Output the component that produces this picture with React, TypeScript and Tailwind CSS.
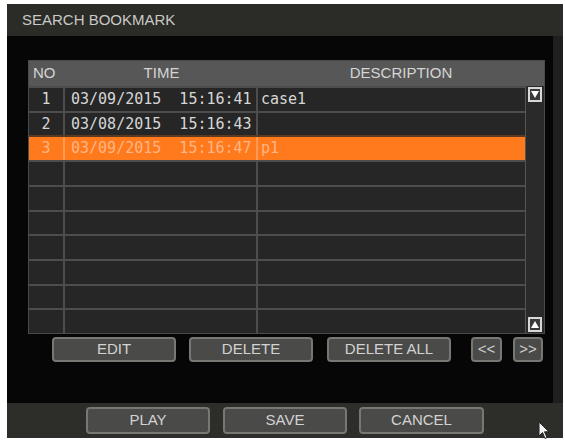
import React from 'react'

type Bookmark = { no: number; time: string; desc: string }

const bookmarks: Bookmark[] = [
  { no: 1, time: '03/09/2015 15:16:41', desc: 'case1' },
  { no: 2, time: '03/08/2015 15:16:43', desc: '' },
  { no: 3, time: '03/09/2015 15:16:47', desc: 'p1' },
]

const SELECTED = 3
const ROWS = 10

const label = { fontFamily: '"Liberation Sans", Arial, sans-serif' }
const mono = { fontFamily: '"DejaVu Sans Mono", "Liberation Mono", monospace' }

function DvrButton({ children, className }: { children: React.ReactNode; className: string }) {
  return (
    <button
      className={`flex items-center justify-center rounded-[4px] border-2 border-[#777774] bg-[#4a4a48] text-[15px] text-[#d2d2d2] ${className}`}
      style={label}
    >
      {children}
    </button>
  )
}

function ArrowBox({ dir }: { dir: 'up' | 'down' }) {
  return (
    <div className="mx-auto flex h-[15px] w-[14px] items-center justify-center border-2 border-[#d8d8d8] bg-[#3a3a3a]">
      <svg width="8" height="7" viewBox="0 0 8 7">
        {dir === 'down' ? <polygon points="0,0 8,0 4,7" fill="#fff" /> : <polygon points="0,7 8,7 4,0" fill="#fff" />}
      </svg>
    </div>
  )
}

export default function App() {
  const rows = Array.from({ length: ROWS }, (_, i) => bookmarks[i] ?? null)

  return (
    <div className="relative h-[440px] w-[565px] overflow-hidden bg-white pl-[7px] pt-[4px]">
      <div className="flex h-[434px] w-[556px] flex-col">
        {/* title bar */}
        <div className="flex h-[32px] items-center bg-[#2b2b28] pl-[15px] text-[15px] text-[#c9c9c6]" style={label}>
          SEARCH BOOKMARK
        </div>

        {/* body */}
        <div className="flex flex-1 flex-col border-r-[10px] border-[#1f1f1e] bg-[#060606] pl-[21px] pt-[24px]">
          <div className="w-[517px] border border-[#4a4a4a]">
            <div className="flex h-[25px] items-center bg-[#575757] text-[15px] text-[#d4d4d4]" style={label}>
              <div className="w-[36px] pl-[4px]">NO</div>
              <div className="w-[193px] text-center">TIME</div>
              <div className="flex-1 text-center">DESCRIPTION</div>
            </div>
            <div className="flex h-[247px]">
              <div className="grid flex-1 grid-rows-[repeat(10,1fr)]">
                {rows.map((r, i) => {
                  const sel = r?.no === SELECTED
                  return (
                    <div
                      key={i}
                      className={`flex border-t-2 text-[15px] ${sel ? 'border-[#5a3a22] bg-[#ff7a1c] text-[#ffb585]' : 'border-[#4d4d4d] bg-[#262626] text-[#d6d6d6]'}`}
                      style={mono}
                    >
                      <div className={`flex w-[36px] items-center justify-center border-r-2 ${sel ? 'border-[#ff9a55]' : 'border-[#4d4d4d]'}`}>
                        {r?.no}
                      </div>
                      <div className={`flex w-[193px] items-center whitespace-pre border-r-2 pl-[6px] ${sel ? 'border-[#ff9a55]' : 'border-[#4d4d4d]'}`}>
                        {r?.time.replace(' ', '  ')}
                      </div>
                      <div className="flex flex-1 items-center pl-[3px]">{r?.desc}</div>
                    </div>
                  )
                })}
              </div>
              {/* scroll column */}
              <div className="flex w-[19px] flex-col justify-between border-l border-[#555] bg-[#2a2a2a] py-[1px]">
                <ArrowBox dir="down" />
                <ArrowBox dir="up" />
              </div>
            </div>
          </div>

          <div className="mt-[3px] flex h-[25px] pl-[24px]">
            <DvrButton className="w-[124px]">EDIT</DvrButton>
            <DvrButton className="ml-[13px] w-[124px]">DELETE</DvrButton>
            <DvrButton className="ml-[14px] w-[124px]">DELETE ALL</DvrButton>
            <DvrButton className="ml-[20px] w-[31px]">&lt;&lt;</DvrButton>
            <DvrButton className="ml-[11px] w-[30px]">&gt;&gt;</DvrButton>
          </div>
        </div>

        {/* bottom bar */}
        <div className="flex h-[35px] items-center bg-[#2d2d29] pl-[79px]">
          <DvrButton className="h-[27px] w-[124px]">PLAY</DvrButton>
          <DvrButton className="ml-[13px] h-[27px] w-[124px]">SAVE</DvrButton>
          <DvrButton className="ml-[12px] h-[27px] w-[125px]">CANCEL</DvrButton>
        </div>
      </div>

      {/* mouse pointer */}
      <svg className="absolute left-[538px] top-[421px]" width="12" height="19" viewBox="0 0 12 19">
        <path d="M1 1 L1 15 L4.5 11.5 L7 17.5 L9 16.5 L6.5 10.8 L11 10.8 Z" fill="#f4f4f4" stroke="#222" strokeWidth="1" />
      </svg>
    </div>
  )
}
